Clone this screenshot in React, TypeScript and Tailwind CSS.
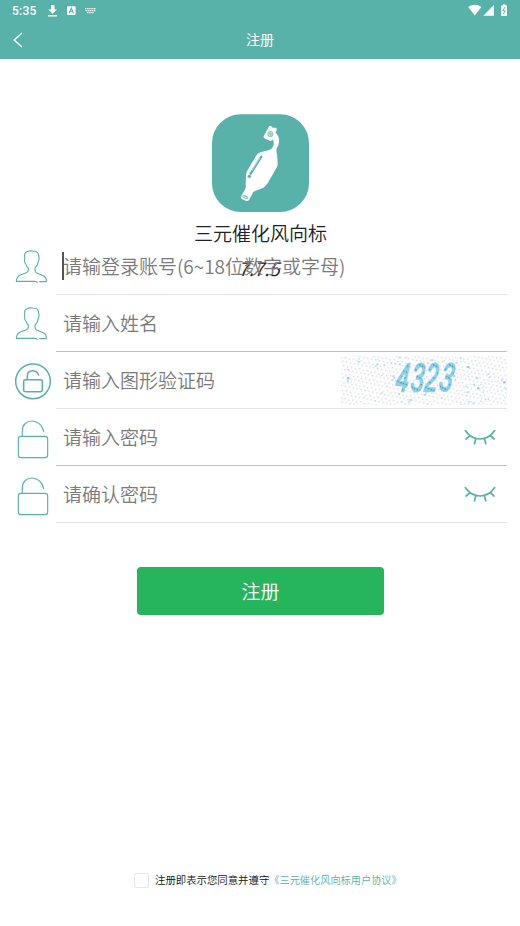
import React from "react";

const TEAL = "#58b2a9";

function StatusBar() {
  return (
    <div className="flex h-[22px] items-center pl-3 pr-[12px] text-white">
      <span className="w-[36px] font-[Roboto] text-[12px] font-medium leading-[22px] tracking-[0.2px]">5:35</span>
      <svg className="h-[22px] w-[52px]" viewBox="48 0 52 22" fill="#fff">
        <path d="M51 5h3.4v4.5h2.6L52.7 13.8 48.3 9.5H51zM48 15h9v1.4h-9z" />
        <rect x="67" y="6.3" width="8.6" height="8.8" rx="1" />
        <path d="M69.2 13.2 71.3 8.2 73.4 13.2M70 11.7h2.7" stroke={TEAL} strokeWidth="1.1" fill="none" />
        <path d="M85 8.7h11M85.5 10.7h10M87 12.7h7" stroke="#fff" strokeWidth="1.3" strokeDasharray="1.6 0.5" opacity="0.85" />
      </svg>
      <svg className="ml-auto h-[22px] w-[40px]" viewBox="468 0 40 22" fill="#fff">
        <path d="M468.2 7.1Q474.7 2.6 481.4 7.1L474.8 15.6z" />
        <path d="M494 4.8V15.8H483.4z" />
        <path d="M503 4.2h2.2v1h1.3q.5 0 .5.6v9.4q0 .7-.6.7h-4.6q-.6 0-.6-.7V5.8q0-.6.6-.6h1.2z" />
        <path d="M504.9 7.2 502.8 10.8H505.2L503.4 14" stroke={TEAL} strokeWidth="1" fill="none" />
      </svg>
    </div>
  );
}

function AppLogo() {
  return (
    <svg className="h-[98px] w-[97px] shrink-0" viewBox="36 27 291 294">
      <rect x="36" y="28" width="291" height="293" rx="86" fill={TEAL} />
      <path
        d="M208 63 Q211 61 214 64 L218 68 227 68 Q231 69 230 74 L227 84 Q236 91 237 106 Q238 119 230 131 Q228 139 231 147 L233 174 Q234 181 229 190 L202 236 Q194 248 182 252 L165 258 Q158 260 157 267 L147 285 Q145 289 139 288 L127 283 Q121 280 123 275 L132 259 Q139 250 137 238 L138 209 Q138 203 143 195 L168 153 Q172 145 181 142 L205 136 Q216 133 220 123 Q223 114 219 104 L216 105 213 109 197 102 Q189 99 191 94z"
        fill="#fff"
      />
      <circle cx="211" cy="87" r="9" fill="#8ec6c0" />
      <circle cx="211" cy="87" r="5" fill="none" stroke="#fff" strokeWidth="1.3" />
      <path d="M184 155 152 206" stroke={TEAL} strokeWidth="7" strokeLinecap="round" />
      <path d="M180 158 155 198" stroke="#fff" strokeWidth="1.5" />
      <circle cx="148" cy="214" r="5" fill={TEAL} />
      <ellipse cx="136" cy="276" rx="10" ry="5" transform="rotate(28 136 276)" fill="#8ec6c0" />
      <path d="M129 273 143 280" stroke="#fff" strokeWidth="1.5" />
    </svg>
  );
}

function PersonIcon() {
  return (
    <svg className="h-[57px] w-[56px]" viewBox="0 6 168 171" fill="none" stroke={TEAL} strokeWidth="3.4" strokeLinecap="round" strokeLinejoin="round">
      <path d="M119 137H139Q140 124 130 119L110 111Q105 108 105 102V96Q114 88 115 76Q118 70 117 65L115 54Q112 46 99 45Q84 43 77 49Q74 52 74 57V70Q72 78 78 85Q80 92 85 96V101Q85 107 79 110L61 117Q50 122 49 136H105L112 139" />
    </svg>
  );
}

function CircleLockIcon() {
  return (
    <svg className="h-[57px] w-[56px]" viewBox="0 0 168 171" fill="none" stroke={TEAL} strokeWidth="4.6" strokeLinecap="round">
      <circle cx="99" cy="88" r="52" />
      <rect x="71" y="83" width="56" height="36" rx="5" />
      <path d="M82 82V72Q82 56 98 56Q111 56 116 69" />
    </svg>
  );
}

function LockIcon() {
  return (
    <svg className="h-[57px] w-[56px]" viewBox="0 3 168 171" fill="none" stroke={TEAL} strokeWidth="3.4" strokeLinecap="round">
      <rect x="55" y="85" width="88" height="64" rx="8" />
      <path d="M67 84V68C67 30 123 28 131 71" />
    </svg>
  );
}

function ClosedEye() {
  return (
    <svg className="ml-auto mr-[11px] h-[20px] w-[32px]" viewBox="0 0 32 20" fill="none" stroke={TEAL} strokeWidth="1.7" strokeLinecap="round">
      <path d="M1.3 3.6Q7 12 16 12T30.7 3.6M6 8.6 2.1 12M11.8 11.5 10.5 16.8M20.4 11.5 21.8 16.8M26.3 8.6 30 12" />
    </svg>
  );
}

// Deterministic speckle so the captcha looks the same on every render.
function speckle(count: number, seed: number) {
  let s = seed;
  const next = () => {
    s = (s * 16807) % 2147483647;
    return s / 2147483647;
  };
  return Array.from({ length: count }, () => [next() * 166, next() * 49, next()]);
}

const BLUE_DOTS = speckle(80, 417);
const CAPTCHA_DIGITS = [
  { d: "4", x: 54, y: 35, r: 2 },
  { d: "3", x: 69, y: 35, r: 2 },
  { d: "2", x: 83, y: 35, r: 2 },
  { d: "3", x: 97, y: 34, r: 7 },
];

function Captcha() {
  return (
    <svg className="ml-auto h-[49px] w-[166px]" viewBox="0 0 166 49">
      <defs>
        <pattern id="grain" width="8" height="8" patternUnits="userSpaceOnUse" patternTransform="rotate(12)">
          <g fill="#d9dbdd">
            <rect x="0" y="1" width="1.4" height="1.3" />
            <rect x="4" y="0" width="1.4" height="1.3" />
            <rect x="2" y="4" width="1.4" height="1.3" />
            <rect x="6" y="4" width="1.4" height="1.3" />
          </g>
        </pattern>
        <pattern id="ink" width="5" height="6" patternUnits="userSpaceOnUse" patternTransform="rotate(12)">
          <rect width="5" height="6" fill="#8ad2ee" />
          <rect x="1" y="1" width="1.4" height="1.4" fill="#294954" />
        </pattern>
      </defs>
      <rect width="166" height="49" fill="#fdfdfd" />
      <rect width="166" height="49" fill="url(#grain)" />
      {BLUE_DOTS.map(([x, y, v], i) => (
        <rect key={i} x={x} y={y} width={1 + v * 1.3} height={1 + v} fill={v > 0.95 ? "#7fb0c2" : "#a8d8eb"} opacity={0.8} />
      ))}
      {CAPTCHA_DIGITS.map(({ d, x, y, r }, i) => (
        <text
          key={i}
          transform={`translate(${x} ${y}) rotate(${r}) skewX(-4) scale(0.57 1)`}
          fill="url(#ink)"
          stroke="#8ad2ee"
          strokeWidth="2"
          paintOrder="stroke"
          fontFamily="Liberation Sans, sans-serif"
          fontStyle="italic"
          fontSize="40"
        >
          {d}
        </text>
      ))}
    </svg>
  );
}

function FieldRow({ icon, hint, faint, focused, children }: {
  icon: React.ReactNode;
  hint: string;
  faint?: boolean;
  focused?: boolean;
  children?: React.ReactNode;
}) {
  return (
    <div className="flex h-[57px] pr-[13px]">
      <div className="w-[56px] shrink-0">{icon}</div>
      <div className={`flex grow items-center border-b ${faint ? "border-[#e4e4e4]" : "border-[#c3c3c3]"}`}>
        <span className={`h-[28px] w-[2px] ml-[6px] -mr-px ${focused ? "bg-[#555]" : "bg-transparent"}`} />
        <span className="whitespace-nowrap text-[19px] font-[350] leading-[28px] text-[#7a7a7a]">{hint}</span>
        {children}
      </div>
    </div>
  );
}

export default function App() {
  return (
    <div className="flex h-[926px] w-[520px] flex-col overflow-hidden bg-white font-['Noto_Sans_CJK_SC',sans-serif]">
      <header className="h-[59px] shrink-0 bg-[#58b2a9] text-white">
        <StatusBar />
        <div className="grid h-[37px] grid-cols-[40px_1fr_40px] items-center">
          <svg className="mb-[2px] ml-[13px] h-[16px] w-[10px]" viewBox="0 0 10 16" fill="none" stroke="#fff" strokeWidth="1.3">
            <path d="M9 1 1.2 8 9 15" />
          </svg>
          <h1 className="pb-[4px] text-center text-[14px] leading-[20px]">注册</h1>
        </div>
      </header>

      <section className="flex h-[179px] shrink-0 flex-col items-center pl-px pt-[55px]">
        <AppLogo />
        <div className="relative mt-[7px] text-[19px] font-[350] leading-[28px] text-[#222]">
          三元催化风向标
          <span className="absolute inset-x-0 top-[35px] pr-[3px] text-center italic">7.7.5</span>
        </div>
      </section>

      <form className="relative shrink-0">
        <FieldRow icon={<PersonIcon />} hint="请输登录账号(6~18位数字或字母)" faint focused />
        <FieldRow icon={<PersonIcon />} hint="请输入姓名" />
        <FieldRow icon={<CircleLockIcon />} hint="请输入图形验证码" faint>
          <Captcha />
        </FieldRow>
        <FieldRow icon={<LockIcon />} hint="请输入密码">
          <ClosedEye />
        </FieldRow>
        <FieldRow icon={<LockIcon />} hint="请确认密码" faint>
          <ClosedEye />
        </FieldRow>
      </form>

      <button className="ml-[137px] mt-[44px] h-[48px] w-[247px] shrink-0 rounded-[4px] bg-[#26b45d] text-[19px] font-[350] leading-[28px] text-white">
        注册
      </button>

      <footer className="mb-[37px] ml-[134px] mt-auto flex items-center text-[10.4px] font-[350] leading-[16px]">
        <span className="mr-[6px] h-[15px] w-[15px] rounded-[2px] border border-[#e6e6e6]" />
        <span className="pb-px text-[#111]">注册即表示您同意并遵守</span>
        <a className="pb-px text-[10.2px] text-[#58b2a9]">《三元催化风向标用户协议》</a>
      </footer>
    </div>
  );
}
